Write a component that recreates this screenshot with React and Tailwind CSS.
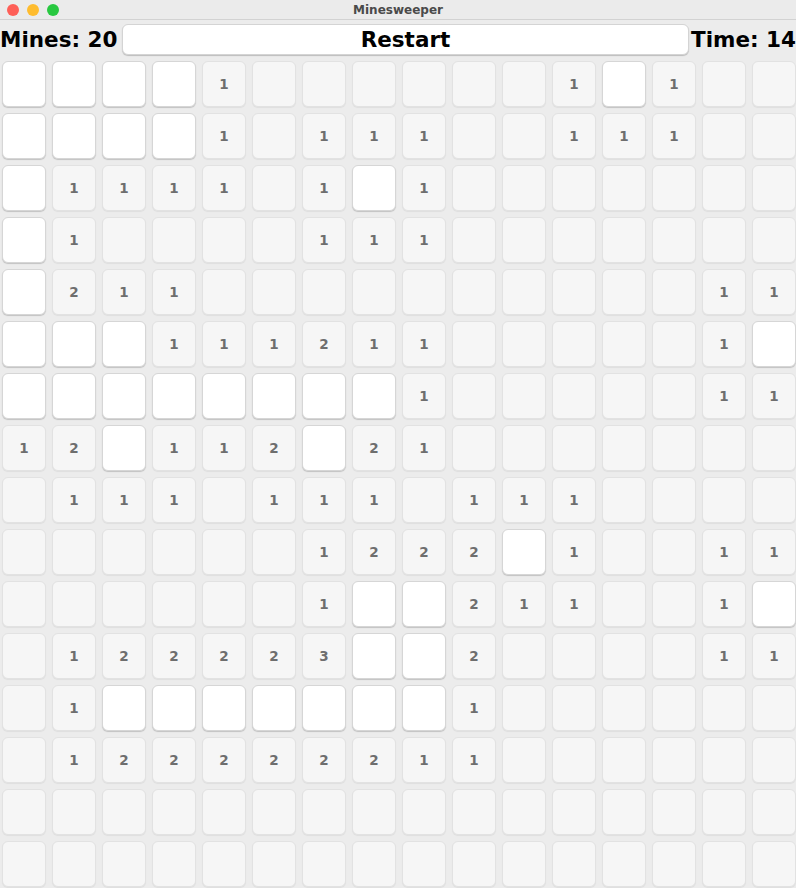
const rows = [
  "UUUU10000001U100",
  "UUUU101110011100",
  "U111101U10000000",
  "U100001110000000",
  "U211000000000011",
  "UUU111211000001U",
  "UUUUUUUU10000011",
  "12U112U210000000",
  "0111011101110000",
  "0000001222U10011",
  "0000001UU211001U",
  "0122223UU2000011",
  "01UUUUUUU1000000",
  "0122222211000000",
  "0000000000000000",
  "0000000000000000",
];

function Cell({ v }) {
  if (v === "U") {
    return (
      <div className="h-[46px] w-[44px] rounded-[6px] bg-white border border-[#d6d6d6] shadow-[0_1px_1px_rgba(0,0,0,0.18)]" />
    );
  }
  return (
    <div className="h-[46px] w-[44px] rounded-[6px] bg-[#f6f6f6] border border-[#e2e2e2] shadow-[0_1px_1px_rgba(0,0,0,0.06)] flex items-center justify-center text-[13.5px] font-bold text-[#6e6e6e]">
      {v !== "0" ? v : ""}
    </div>
  );
}

export default function App() {
  return (
    <div
      className="w-[796px] h-[888px] overflow-hidden bg-[#ececec]"
      style={{ fontFamily: '"DejaVu Sans", sans-serif' }}
    >
      {/* Title bar */}
      <div className="relative h-[20px] bg-[#ebebeb] border-b border-[#d2d2d2] flex items-center justify-center">
        <div className="absolute left-[7px] top-[4px] flex gap-[8px]">
          <span className="w-[12px] h-[12px] rounded-full bg-[#fe5f57]" />
          <span className="w-[12px] h-[12px] rounded-full bg-[#febc2e]" />
          <span className="w-[12px] h-[12px] rounded-full bg-[#28c840]" />
        </div>
        <span className="text-[12px] font-bold text-[#4a4a4a]">Minesweeper</span>
      </div>

      {/* Header */}
      <div className="h-[39px] flex items-center whitespace-nowrap">
        <div className="w-[121px] shrink-0 text-[21.5px] font-bold text-black leading-none">Mines: 20</div>
        <button className="w-[567px] shrink-0 h-[31px] ml-[1px] rounded-[6px] bg-white border border-[#d4d4d4] shadow-[0_1px_1px_rgba(0,0,0,0.2)] text-[21.5px] font-bold text-black leading-none">
          Restart
        </button>
        <div className="flex-1 text-right text-[21.5px] font-bold text-black leading-none">Time: 14</div>
      </div>

      {/* Board */}
      <div className="pl-[2px] pt-[2px] grid grid-cols-[repeat(16,44px)] gap-x-[6px] gap-y-[6px]">
        {rows.map((r, i) =>
          r.split("").map((v, j) => <Cell key={i + "-" + j} v={v} />)
        )}
      </div>
    </div>
  );
}
